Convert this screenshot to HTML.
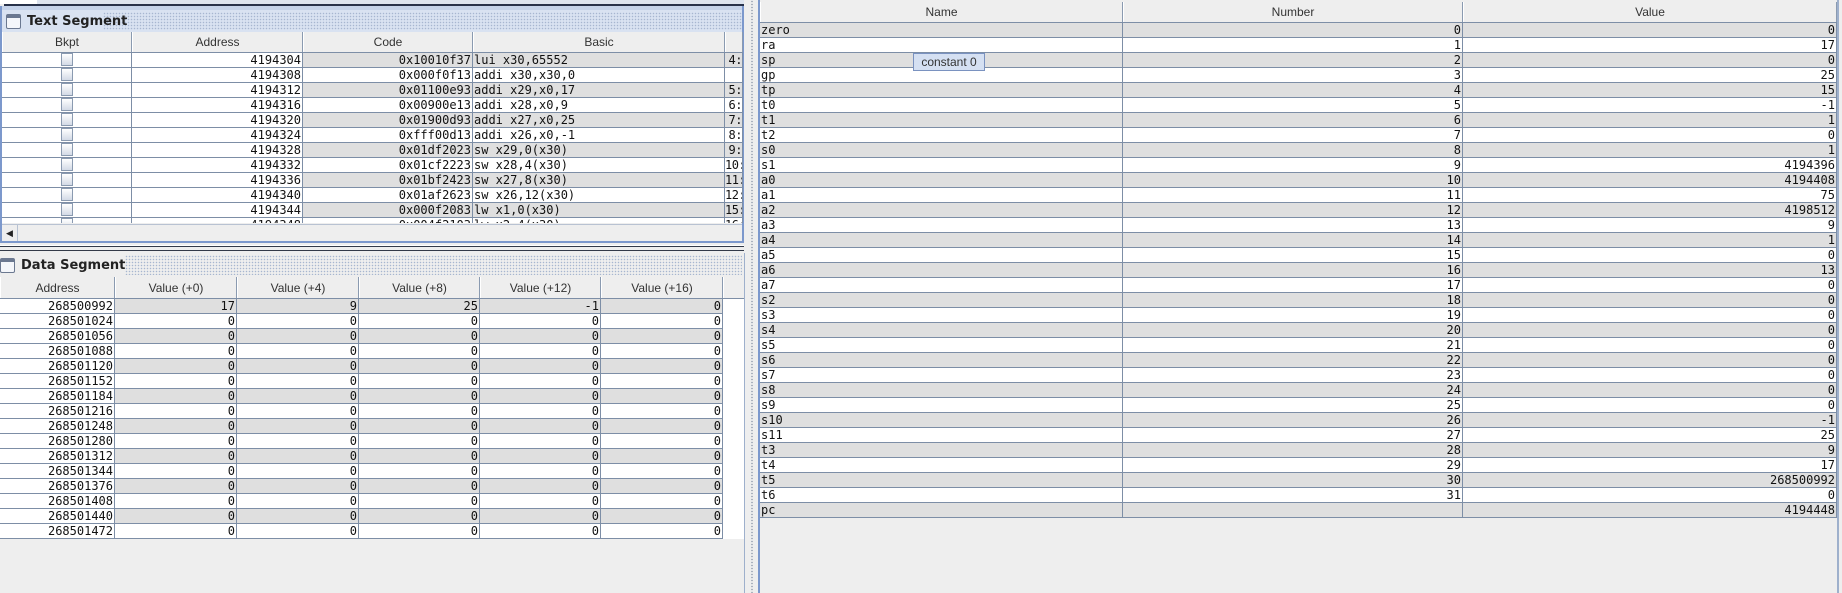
<!DOCTYPE html>
<html><head><meta charset="utf-8"><style>
*{box-sizing:border-box;margin:0;padding:0}
body{width:1842px;height:593px;background:#eeeeee;position:relative;overflow:hidden;font-family:"Liberation Sans",sans-serif}
.abs{position:absolute}
.row{position:absolute;left:0;height:15px;display:flex;border-bottom:1px solid #7d8ea6}
.c{height:14px;border-right:1px solid #7d8ea6;font:12px/14px "DejaVu Sans Mono","Liberation Mono",monospace;color:#111;overflow:hidden;white-space:nowrap;padding:0 1px}
.r{text-align:right}
.g{background:#dfdfdf}
.w{background:#fff}
.x{padding:0;text-align:right;letter-spacing:-0.5px}
.hdr{position:absolute;display:flex;background:#eeeeee;border-bottom:1px solid #7d8ea6}
.h{border-right:1px solid #8a9ab0;font:12px "Liberation Sans",sans-serif;color:#333;text-align:center;display:flex;align-items:center;justify-content:center;border-left:1px solid #fff}
.title{position:absolute;font:bold 13px "DejaVu Sans","Liberation Sans",sans-serif;color:#222;display:flex;align-items:center}
.dots{position:absolute;background-image:radial-gradient(circle,#a7b6d0 0.6px,transparent 0.9px);background-size:3px 3px}
.cb{display:inline-block;width:12px;height:13px;border:1px solid #8a9ab0;background:linear-gradient(#fff,#d3dae6);margin-top:0px}
.ico{width:15px;height:15px;border:1.5px solid #6b7890;border-top-width:4px;border-radius:2px;background:#f4f6fa;margin:0 6px 0 4px}
</style></head><body>
<div class="abs" style="left:0;top:0;width:744px;height:4px;background:#dde4ef"></div>
<div class="abs" style="left:0;top:0;width:37px;height:4px;background:#fff"></div>
<div class="abs" style="left:4px;top:4px;width:740px;height:2px;background:#28324a"></div>
<div class="abs" style="left:0;top:6px;width:744px;height:4px;background:#c5d3ea"></div>
<div class="abs" style="left:0;top:6px;width:744px;height:237px;border:2px solid #7c98cc;border-top:none"></div>
<div class="abs" style="left:2px;top:10px;width:740px;height:22px;background:#d9e2f1"></div>
<div class="dots" style="left:103px;top:12px;width:639px;height:18px"></div>
<div class="title" style="left:2px;top:10px;height:22px"><div class="ico"></div>Text Segment</div>

<div class="hdr" style="left:2px;top:32px;width:741px;height:21px">
<div class="h" style="width:130px">Bkpt</div><div class="h" style="width:171px">Address</div><div class="h" style="width:170px">Code</div><div class="h" style="width:252px">Basic</div><div class="h" style="width:18px"></div></div>

<div class="abs" style="left:2px;top:53px;width:741px;height:170px;overflow:hidden;background:#fff">
<div class="row" style="top:0"><div class="c w" style="width:130px;text-align:center"><span class="cb"></span></div><div class="c w r" style="width:171px">4194304</div><div class="c g r" style="width:170px">0x10010f37</div><div class="c g" style="width:252px">lui x30,65552</div><div class="c g x" style="width:18px">4:</div></div>
<div class="row" style="top:15px"><div class="c w" style="width:130px;text-align:center"><span class="cb"></span></div><div class="c w r" style="width:171px">4194308</div><div class="c w r" style="width:170px">0x000f0f13</div><div class="c w" style="width:252px">addi x30,x30,0</div><div class="c w x" style="width:18px"></div></div>
<div class="row" style="top:30px"><div class="c w" style="width:130px;text-align:center"><span class="cb"></span></div><div class="c w r" style="width:171px">4194312</div><div class="c g r" style="width:170px">0x01100e93</div><div class="c g" style="width:252px">addi x29,x0,17</div><div class="c g x" style="width:18px">5:</div></div>
<div class="row" style="top:45px"><div class="c w" style="width:130px;text-align:center"><span class="cb"></span></div><div class="c w r" style="width:171px">4194316</div><div class="c w r" style="width:170px">0x00900e13</div><div class="c w" style="width:252px">addi x28,x0,9</div><div class="c w x" style="width:18px">6:</div></div>
<div class="row" style="top:60px"><div class="c w" style="width:130px;text-align:center"><span class="cb"></span></div><div class="c w r" style="width:171px">4194320</div><div class="c g r" style="width:170px">0x01900d93</div><div class="c g" style="width:252px">addi x27,x0,25</div><div class="c g x" style="width:18px">7:</div></div>
<div class="row" style="top:75px"><div class="c w" style="width:130px;text-align:center"><span class="cb"></span></div><div class="c w r" style="width:171px">4194324</div><div class="c w r" style="width:170px">0xfff00d13</div><div class="c w" style="width:252px">addi x26,x0,-1</div><div class="c w x" style="width:18px">8:</div></div>
<div class="row" style="top:90px"><div class="c w" style="width:130px;text-align:center"><span class="cb"></span></div><div class="c w r" style="width:171px">4194328</div><div class="c g r" style="width:170px">0x01df2023</div><div class="c g" style="width:252px">sw x29,0(x30)</div><div class="c g x" style="width:18px">9:</div></div>
<div class="row" style="top:105px"><div class="c w" style="width:130px;text-align:center"><span class="cb"></span></div><div class="c w r" style="width:171px">4194332</div><div class="c w r" style="width:170px">0x01cf2223</div><div class="c w" style="width:252px">sw x28,4(x30)</div><div class="c w x" style="width:18px">10:</div></div>
<div class="row" style="top:120px"><div class="c w" style="width:130px;text-align:center"><span class="cb"></span></div><div class="c w r" style="width:171px">4194336</div><div class="c g r" style="width:170px">0x01bf2423</div><div class="c g" style="width:252px">sw x27,8(x30)</div><div class="c g x" style="width:18px">11:</div></div>
<div class="row" style="top:135px"><div class="c w" style="width:130px;text-align:center"><span class="cb"></span></div><div class="c w r" style="width:171px">4194340</div><div class="c w r" style="width:170px">0x01af2623</div><div class="c w" style="width:252px">sw x26,12(x30)</div><div class="c w x" style="width:18px">12:</div></div>
<div class="row" style="top:150px"><div class="c w" style="width:130px;text-align:center"><span class="cb"></span></div><div class="c w r" style="width:171px">4194344</div><div class="c g r" style="width:170px">0x000f2083</div><div class="c g" style="width:252px">lw x1,0(x30)</div><div class="c g x" style="width:18px">15:</div></div>
<div class="row" style="top:165px"><div class="c w" style="width:130px;text-align:center"><span class="cb"></span></div><div class="c w r" style="width:171px">4194348</div><div class="c w r" style="width:170px">0x004f2103</div><div class="c w" style="width:252px">lw x2,4(x30)</div><div class="c w x" style="width:18px">16:</div></div>
</div>
<div class="abs" style="left:2px;top:224px;width:740px;height:17px;background:#eeeeee;border-top:1px solid #b8c2d2"></div>
<div class="abs" style="left:2px;top:225px;width:16px;height:16px;border-right:1px solid #b8c2d2;font-size:9px;line-height:16px;text-align:center;color:#222">&#9664;</div>

<div class="abs" style="left:0;top:245px;width:744px;height:1px;background:#fff"></div>
<div class="abs" style="left:0;top:246px;width:744px;height:1px;background:#333a48"></div>
<div class="abs" style="left:0;top:250px;width:744px;height:1px;background:#333a48"></div>

<div class="abs" style="left:0;top:253px;width:744px;height:24px;background:#eeeeee"></div>
<div class="dots" style="left:125px;top:255px;width:617px;height:20px"></div>
<div class="title" style="left:-4px;top:253px;height:24px"><div class="ico"></div>Data Segment</div>
<div class="hdr" style="left:0;top:277px;width:744px;height:22px">
<div class="h" style="width:115px">Address</div><div class="h" style="width:122px">Value (+0)</div><div class="h" style="width:122px">Value (+4)</div><div class="h" style="width:121px">Value (+8)</div><div class="h" style="width:121px">Value (+12)</div><div class="h" style="width:122px">Value (+16)</div><div class="h" style="width:21px;border-right:none"></div></div>
<div class="abs" style="left:0;top:299px;width:723px;height:240px">
<div class="row" style="top:0"><div class="c w r" style="width:115px">268500992</div><div class="c g r" style="width:122px">17</div><div class="c g r" style="width:122px">9</div><div class="c g r" style="width:121px">25</div><div class="c g r" style="width:121px">-1</div><div class="c g r" style="width:122px">0</div></div>
<div class="row" style="top:15px"><div class="c w r" style="width:115px">268501024</div><div class="c w r" style="width:122px">0</div><div class="c w r" style="width:122px">0</div><div class="c w r" style="width:121px">0</div><div class="c w r" style="width:121px">0</div><div class="c w r" style="width:122px">0</div></div>
<div class="row" style="top:30px"><div class="c w r" style="width:115px">268501056</div><div class="c g r" style="width:122px">0</div><div class="c g r" style="width:122px">0</div><div class="c g r" style="width:121px">0</div><div class="c g r" style="width:121px">0</div><div class="c g r" style="width:122px">0</div></div>
<div class="row" style="top:45px"><div class="c w r" style="width:115px">268501088</div><div class="c w r" style="width:122px">0</div><div class="c w r" style="width:122px">0</div><div class="c w r" style="width:121px">0</div><div class="c w r" style="width:121px">0</div><div class="c w r" style="width:122px">0</div></div>
<div class="row" style="top:60px"><div class="c w r" style="width:115px">268501120</div><div class="c g r" style="width:122px">0</div><div class="c g r" style="width:122px">0</div><div class="c g r" style="width:121px">0</div><div class="c g r" style="width:121px">0</div><div class="c g r" style="width:122px">0</div></div>
<div class="row" style="top:75px"><div class="c w r" style="width:115px">268501152</div><div class="c w r" style="width:122px">0</div><div class="c w r" style="width:122px">0</div><div class="c w r" style="width:121px">0</div><div class="c w r" style="width:121px">0</div><div class="c w r" style="width:122px">0</div></div>
<div class="row" style="top:90px"><div class="c w r" style="width:115px">268501184</div><div class="c g r" style="width:122px">0</div><div class="c g r" style="width:122px">0</div><div class="c g r" style="width:121px">0</div><div class="c g r" style="width:121px">0</div><div class="c g r" style="width:122px">0</div></div>
<div class="row" style="top:105px"><div class="c w r" style="width:115px">268501216</div><div class="c w r" style="width:122px">0</div><div class="c w r" style="width:122px">0</div><div class="c w r" style="width:121px">0</div><div class="c w r" style="width:121px">0</div><div class="c w r" style="width:122px">0</div></div>
<div class="row" style="top:120px"><div class="c w r" style="width:115px">268501248</div><div class="c g r" style="width:122px">0</div><div class="c g r" style="width:122px">0</div><div class="c g r" style="width:121px">0</div><div class="c g r" style="width:121px">0</div><div class="c g r" style="width:122px">0</div></div>
<div class="row" style="top:135px"><div class="c w r" style="width:115px">268501280</div><div class="c w r" style="width:122px">0</div><div class="c w r" style="width:122px">0</div><div class="c w r" style="width:121px">0</div><div class="c w r" style="width:121px">0</div><div class="c w r" style="width:122px">0</div></div>
<div class="row" style="top:150px"><div class="c w r" style="width:115px">268501312</div><div class="c g r" style="width:122px">0</div><div class="c g r" style="width:122px">0</div><div class="c g r" style="width:121px">0</div><div class="c g r" style="width:121px">0</div><div class="c g r" style="width:122px">0</div></div>
<div class="row" style="top:165px"><div class="c w r" style="width:115px">268501344</div><div class="c w r" style="width:122px">0</div><div class="c w r" style="width:122px">0</div><div class="c w r" style="width:121px">0</div><div class="c w r" style="width:121px">0</div><div class="c w r" style="width:122px">0</div></div>
<div class="row" style="top:180px"><div class="c w r" style="width:115px">268501376</div><div class="c g r" style="width:122px">0</div><div class="c g r" style="width:122px">0</div><div class="c g r" style="width:121px">0</div><div class="c g r" style="width:121px">0</div><div class="c g r" style="width:122px">0</div></div>
<div class="row" style="top:195px"><div class="c w r" style="width:115px">268501408</div><div class="c w r" style="width:122px">0</div><div class="c w r" style="width:122px">0</div><div class="c w r" style="width:121px">0</div><div class="c w r" style="width:121px">0</div><div class="c w r" style="width:122px">0</div></div>
<div class="row" style="top:210px"><div class="c w r" style="width:115px">268501440</div><div class="c g r" style="width:122px">0</div><div class="c g r" style="width:122px">0</div><div class="c g r" style="width:121px">0</div><div class="c g r" style="width:121px">0</div><div class="c g r" style="width:122px">0</div></div>
<div class="row" style="top:225px"><div class="c w r" style="width:115px">268501472</div><div class="c w r" style="width:122px">0</div><div class="c w r" style="width:122px">0</div><div class="c w r" style="width:121px">0</div><div class="c w r" style="width:121px">0</div><div class="c w r" style="width:122px">0</div></div>
</div>
<div class="abs" style="left:723px;top:299px;width:21px;height:240px;background:#fff"></div>
<div class="abs" style="left:744px;top:253px;width:1px;height:340px;background:#9eb0cc"></div>

<div class="abs" style="left:745px;top:0;width:13px;height:593px;background:#eeeeee"></div>
<div class="abs" style="left:751px;top:0;width:2px;height:593px;background-image:radial-gradient(circle,#8c97a8 0.6px,transparent 0.9px);background-size:2px 3px"></div>
<div class="abs" style="left:758px;top:0;width:2px;height:593px;background:#7c98cc"></div>

<div class="hdr" style="left:760px;top:2px;width:1078px;height:21px">
<div class="h" style="width:363px">Name</div><div class="h" style="width:340px">Number</div><div class="h" style="width:374px">Value</div></div>
<div class="abs" style="left:760px;top:23px;width:1077px;height:495px">
<div class="row" style="top:0"><div class="c g" style="width:363px">zero</div><div class="c g r" style="width:340px">0</div><div class="c g r" style="width:374px">0</div></div>
<div class="row" style="top:15px"><div class="c w" style="width:363px">ra</div><div class="c w r" style="width:340px">1</div><div class="c w r" style="width:374px">17</div></div>
<div class="row" style="top:30px"><div class="c g" style="width:363px">sp</div><div class="c g r" style="width:340px">2</div><div class="c g r" style="width:374px">0</div></div>
<div class="row" style="top:45px"><div class="c w" style="width:363px">gp</div><div class="c w r" style="width:340px">3</div><div class="c w r" style="width:374px">25</div></div>
<div class="row" style="top:60px"><div class="c g" style="width:363px">tp</div><div class="c g r" style="width:340px">4</div><div class="c g r" style="width:374px">15</div></div>
<div class="row" style="top:75px"><div class="c w" style="width:363px">t0</div><div class="c w r" style="width:340px">5</div><div class="c w r" style="width:374px">-1</div></div>
<div class="row" style="top:90px"><div class="c g" style="width:363px">t1</div><div class="c g r" style="width:340px">6</div><div class="c g r" style="width:374px">1</div></div>
<div class="row" style="top:105px"><div class="c w" style="width:363px">t2</div><div class="c w r" style="width:340px">7</div><div class="c w r" style="width:374px">0</div></div>
<div class="row" style="top:120px"><div class="c g" style="width:363px">s0</div><div class="c g r" style="width:340px">8</div><div class="c g r" style="width:374px">1</div></div>
<div class="row" style="top:135px"><div class="c w" style="width:363px">s1</div><div class="c w r" style="width:340px">9</div><div class="c w r" style="width:374px">4194396</div></div>
<div class="row" style="top:150px"><div class="c g" style="width:363px">a0</div><div class="c g r" style="width:340px">10</div><div class="c g r" style="width:374px">4194408</div></div>
<div class="row" style="top:165px"><div class="c w" style="width:363px">a1</div><div class="c w r" style="width:340px">11</div><div class="c w r" style="width:374px">75</div></div>
<div class="row" style="top:180px"><div class="c g" style="width:363px">a2</div><div class="c g r" style="width:340px">12</div><div class="c g r" style="width:374px">4198512</div></div>
<div class="row" style="top:195px"><div class="c w" style="width:363px">a3</div><div class="c w r" style="width:340px">13</div><div class="c w r" style="width:374px">9</div></div>
<div class="row" style="top:210px"><div class="c g" style="width:363px">a4</div><div class="c g r" style="width:340px">14</div><div class="c g r" style="width:374px">1</div></div>
<div class="row" style="top:225px"><div class="c w" style="width:363px">a5</div><div class="c w r" style="width:340px">15</div><div class="c w r" style="width:374px">0</div></div>
<div class="row" style="top:240px"><div class="c g" style="width:363px">a6</div><div class="c g r" style="width:340px">16</div><div class="c g r" style="width:374px">13</div></div>
<div class="row" style="top:255px"><div class="c w" style="width:363px">a7</div><div class="c w r" style="width:340px">17</div><div class="c w r" style="width:374px">0</div></div>
<div class="row" style="top:270px"><div class="c g" style="width:363px">s2</div><div class="c g r" style="width:340px">18</div><div class="c g r" style="width:374px">0</div></div>
<div class="row" style="top:285px"><div class="c w" style="width:363px">s3</div><div class="c w r" style="width:340px">19</div><div class="c w r" style="width:374px">0</div></div>
<div class="row" style="top:300px"><div class="c g" style="width:363px">s4</div><div class="c g r" style="width:340px">20</div><div class="c g r" style="width:374px">0</div></div>
<div class="row" style="top:315px"><div class="c w" style="width:363px">s5</div><div class="c w r" style="width:340px">21</div><div class="c w r" style="width:374px">0</div></div>
<div class="row" style="top:330px"><div class="c g" style="width:363px">s6</div><div class="c g r" style="width:340px">22</div><div class="c g r" style="width:374px">0</div></div>
<div class="row" style="top:345px"><div class="c w" style="width:363px">s7</div><div class="c w r" style="width:340px">23</div><div class="c w r" style="width:374px">0</div></div>
<div class="row" style="top:360px"><div class="c g" style="width:363px">s8</div><div class="c g r" style="width:340px">24</div><div class="c g r" style="width:374px">0</div></div>
<div class="row" style="top:375px"><div class="c w" style="width:363px">s9</div><div class="c w r" style="width:340px">25</div><div class="c w r" style="width:374px">0</div></div>
<div class="row" style="top:390px"><div class="c g" style="width:363px">s10</div><div class="c g r" style="width:340px">26</div><div class="c g r" style="width:374px">-1</div></div>
<div class="row" style="top:405px"><div class="c w" style="width:363px">s11</div><div class="c w r" style="width:340px">27</div><div class="c w r" style="width:374px">25</div></div>
<div class="row" style="top:420px"><div class="c g" style="width:363px">t3</div><div class="c g r" style="width:340px">28</div><div class="c g r" style="width:374px">9</div></div>
<div class="row" style="top:435px"><div class="c w" style="width:363px">t4</div><div class="c w r" style="width:340px">29</div><div class="c w r" style="width:374px">17</div></div>
<div class="row" style="top:450px"><div class="c g" style="width:363px">t5</div><div class="c g r" style="width:340px">30</div><div class="c g r" style="width:374px">268500992</div></div>
<div class="row" style="top:465px"><div class="c w" style="width:363px">t6</div><div class="c w r" style="width:340px">31</div><div class="c w r" style="width:374px">0</div></div>
<div class="row" style="top:480px"><div class="c g" style="width:363px">pc</div><div class="c g r" style="width:340px"></div><div class="c g r" style="width:374px">4194448</div></div>
</div>
<div class="abs" style="left:1837px;top:0;width:2px;height:593px;background:#9eb0cc"></div>
<div class="abs" style="left:913px;top:53px;width:72px;height:18px;background:#d5e0f2;border:1px solid #7a92c0;font:12px/16px 'Liberation Sans',sans-serif;color:#333;text-align:center">constant 0</div>
</body></html>
